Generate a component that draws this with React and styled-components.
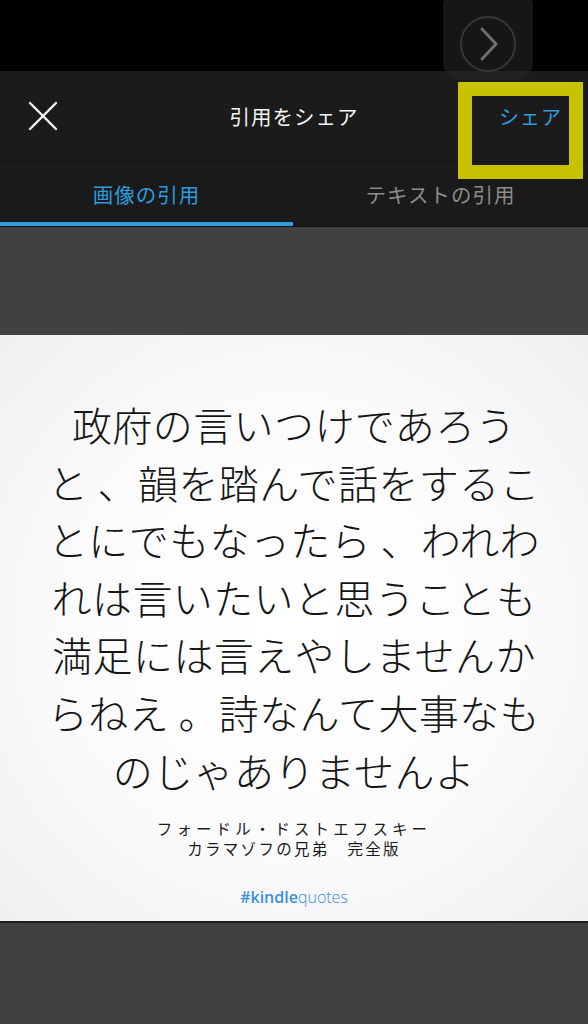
import styled, { createGlobalStyle } from "styled-components";

const GlobalStyle = createGlobalStyle`
  html, body {
    margin: 0;
    padding: 0;
    background: #404040;
  }
  body {
    font-family: "Noto Sans CJK JP", "Noto Sans", sans-serif;
  }
`;

const quoteLines = [
  "政府の言いつけであろう",
  "と 、韻を踏んで話をするこ",
  "とにでもなったら 、われわ",
  "れは言いたいと思うことも",
  "満足には言えやしませんか",
  "らねえ 。詩なんて大事なも",
  "のじゃありませんよ",
];

const App = () => {
  return (
    <Screen>
      <GlobalStyle />
      <ReaderStrip />
      <PageButton>
        <Ring>
          <svg width="20" height="34" viewBox="0 0 20 34">
            <path
              d="M3 2 L17 17 L3 32"
              fill="none"
              stroke="#6f6f6f"
              strokeWidth="3"
              strokeLinecap="round"
              strokeLinejoin="round"
            />
          </svg>
        </Ring>
      </PageButton>

      <Header>
        <CloseButton aria-label="close">
          <svg width="30" height="30" viewBox="0 0 30 30">
            <path
              d="M2 2 L28 28 M28 2 L2 28"
              stroke="#f2f2f2"
              strokeWidth="2.4"
              strokeLinecap="round"
            />
          </svg>
        </CloseButton>
        <Title>引用をシェア</Title>
        <ShareLink>シェア</ShareLink>
      </Header>
      <Highlight />

      <Tabs>
        <Tab $active>画像の引用</Tab>
        <Tab>テキストの引用</Tab>
      </Tabs>

      <Backdrop>
        <Spacer $h={108} />
        <Card>
          <Quote>
            {quoteLines.map((line) => (
              <QuoteLine key={line}>{line}</QuoteLine>
            ))}
          </Quote>
          <Source>
            <SourceLine $spacing={4.1}>フォードル・ドストエフスキー</SourceLine>
            <SourceLine $spacing={2.3}>カラマゾフの兄弟　完全版</SourceLine>
          </Source>
          <Hashtag>
            <b>#kindle</b>quotes
          </Hashtag>
        </Card>
        <Spacer $h={101} />
      </Backdrop>
    </Screen>
  );
};

const Screen = styled.div`
  position: relative;
  width: 588px;
  height: 1024px;
  overflow: hidden;
  background: #404040;
`;

const ReaderStrip = styled.div`
  height: 71px;
  background: #000;
`;

const PageButton = styled.div`
  position: absolute;
  top: -12px;
  left: 443px;
  width: 90px;
  height: 92px;
  border-radius: 18px;
  background: rgba(40, 40, 40, 0.55);
  display: flex;
  align-items: center;
  justify-content: center;
  padding-top: 20px;
  box-sizing: border-box;
  z-index: 2;
`;

const Ring = styled.div`
  width: 56px;
  height: 56px;
  border-radius: 50%;
  border: 2px solid #363636;
  display: flex;
  align-items: center;
  justify-content: center;
  padding-left: 2px;
  box-sizing: border-box;
`;

const Header = styled.div`
  position: relative;
  height: 90px;
  background: #1b1b1b;
  display: flex;
  align-items: center;
  justify-content: space-between;
  padding: 0 26px 0 28px;
  box-shadow: 0 1px 0 #111;
  z-index: 1;
`;

const CloseButton = styled.div`
  width: 30px;
  height: 30px;
`;

const Title = styled.div`
  position: absolute;
  left: 0;
  right: 0;
  text-align: center;
  color: #f4f4f4;
  font-size: 20.5px;
  letter-spacing: 1px;
  pointer-events: none;
`;

const ShareLink = styled.div`
  color: #2f9ddd;
  font-size: 20px;
  letter-spacing: 1px;
`;

/* yellow callout drawn over the share button */
const Highlight = styled.div`
  position: absolute;
  left: 458px;
  top: 82px;
  width: 125px;
  height: 97px;
  box-sizing: border-box;
  border: 14px solid #c8c100;
  z-index: 3;
`;

const Tabs = styled.div`
  display: grid;
  grid-template-columns: 293px 1fr;
  height: 65px;
  background: #1a1a1a;
  border-bottom: 1px solid #101010;
`;

const Tab = styled.div`
  display: flex;
  align-items: center;
  justify-content: center;
  padding-top: 4px;
  font-size: 20.5px;
  letter-spacing: 1px;
  color: ${(p) => (p.$active ? "#2d9bdc" : "#8c8c8c")};
  border-bottom: 4px solid ${(p) => (p.$active ? "#2b9fe0" : "transparent")};
`;

const Backdrop = styled.div`
  display: flex;
  flex-direction: column;
  background: #414141;
`;

const Spacer = styled.div`
  height: ${(p) => p.$h}px;
`;

const Card = styled.div`
  height: 588px;
  box-sizing: border-box;
  padding-top: 61px;
  background: radial-gradient(
    ellipse at 50% 50%,
    #ffffff 0%,
    #fbfbfc 55%,
    #eeeff1 100%
  );
  border-bottom: 2px solid #1e1e1e;
  display: flex;
  flex-direction: column;
  align-items: center;
`;

const Quote = styled.div`
  color: #151515;
  font-size: 40px;
  line-height: 57.6px;
  font-weight: 300;
  letter-spacing: 0.4px;
  text-align: center;
`;

const QuoteLine = styled.div`
  white-space: nowrap;
`;

const Source = styled.div`
  margin-top: 20px;
  color: #1a1a1a;
  font-size: 15.5px;
  line-height: 19.5px;
  font-weight: 400;
  text-align: center;
`;

const SourceLine = styled.div`
  letter-spacing: ${(p) => p.$spacing}px;
  white-space: nowrap;
`;

const Hashtag = styled.div`
  margin-top: 29px;
  color: #3b8fd9;
  font-family: "Open Sans", "Noto Sans", sans-serif;
  font-size: 16px;
  line-height: 20px;
  font-weight: 300;

  b {
    font-weight: 600;
  }
`;

export default App;
